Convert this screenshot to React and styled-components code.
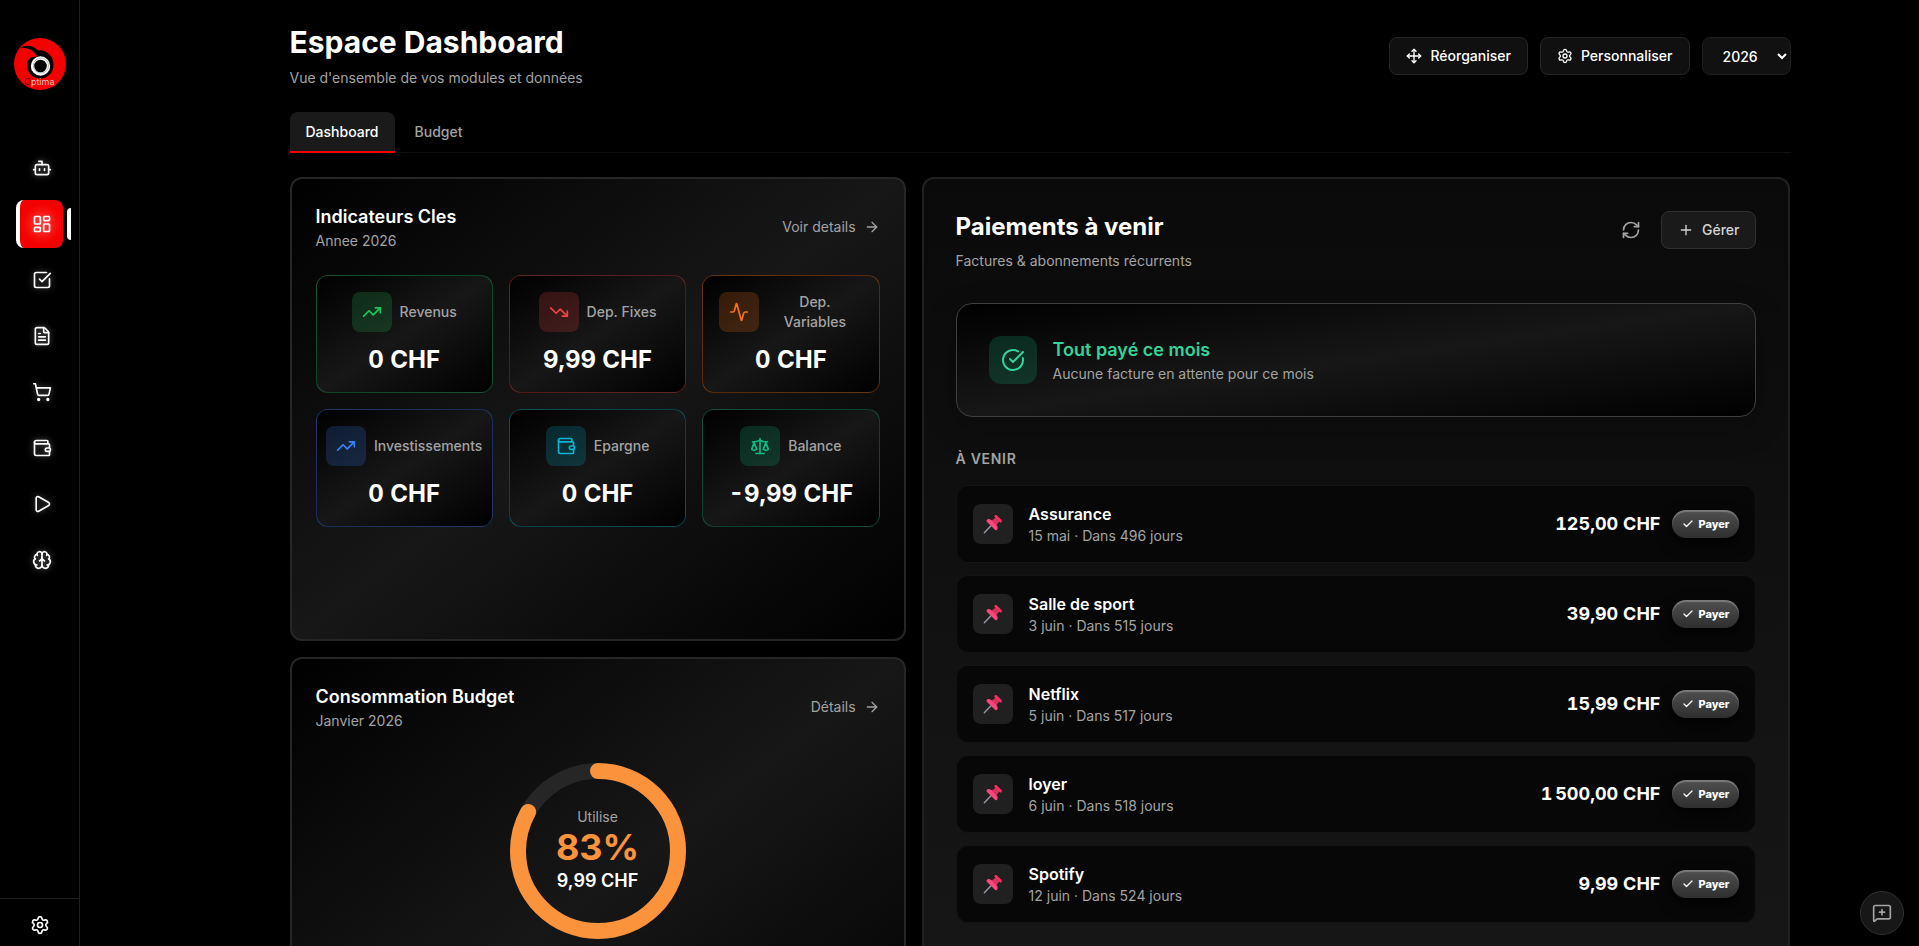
import React, { useState } from 'react'
import styled, { createGlobalStyle } from 'styled-components'
import {
    Activity,
    ArrowRight,
    Bot,
    Brain,
    Check,
    CircleCheckBig,
    FileText,
    LayoutDashboard,
    MessageSquarePlus,
    Move,
    Play,
    Plus,
    RefreshCw,
    Scale,
    Settings,
    ShoppingCart,
    SquareCheckBig,
    TrendingDown,
    TrendingUp,
    Wallet
} from 'lucide-react'

const GlobalStyle = createGlobalStyle`
    * {
        box-sizing: border-box;
    }
    html {
        scrollbar-width: none;
        background: #000;
    }
    body {
        margin: 0;
        background: #000;
        color: #fff;
        font-family: Inter, "Liberation Sans", sans-serif;
        font-size: 14px;
        line-height: 20px;
    }
    h1, h2, h3, p, ul {
        margin: 0;
        padding: 0;
    }
    ul {
        list-style: none;
    }
    button, select {
        font: inherit;
        color: inherit;
        cursor: pointer;
    }
    a {
        color: inherit;
        text-decoration: none;
    }
`

const Shell = styled.div`
    display: grid;
    grid-template-columns: 80px minmax(0, 1fr);
    align-items: start;
`

const Sidebar = styled.aside`
    position: sticky;
    top: 0;
    height: 100vh;
    display: flex;
    flex-direction: column;
    border-right: 1px solid #202020;
`
const LogoLink = styled.a`
    display: flex;
    justify-content: center;
    padding: 38px 0 54px 1px;
`
const Nav = styled.nav`
    flex: 1;
    display: flex;
    flex-direction: column;
    gap: 8px;
    padding: 0 16px;
`
const NavLink = styled.a`
    position: relative;
    display: flex;
    align-items: center;
    justify-content: center;
    height: 48px;
    border-left: 4px solid ${props => (props.$active ? '#fff' : 'transparent')};
    border-radius: 8px;
    background: ${props => (props.$active ? 'radial-gradient(circle, #f83030 0, #f40000 20px)' : 'transparent')};

    svg {
        filter: drop-shadow(0 0 3px rgba(255, 255, 255, ${props => (props.$active ? 0.2 : 0.4)}));
    }
`
const ActiveMark = styled.span`
    position: absolute;
    right: -8px;
    width: 4px;
    height: 32px;
    border-radius: 4px 0 0 4px;
    background: #fff;
`
const SidebarFooter = styled.div`
    display: flex;
    justify-content: center;
    padding: 16px 0 11px 1px;
    border-top: 1px solid #202020;
`
const FooterLink = styled.a`
    display: flex;
`

const Main = styled.main`
    padding: 24px 16px 24px 97px;
`
const Content = styled.div`
    max-width: 1501px;
    margin: 0 auto;
`
const PageHeader = styled.header`
    display: flex;
    align-items: center;
    justify-content: space-between;
    margin-bottom: 24px;
`
const PageTitle = styled.h1`
    margin-bottom: 8px;
    font-size: 30px;
    line-height: 36px;
    font-weight: 700;
`
const Muted = styled.p`
    color: #a3a3a3;
`
const Actions = styled.div`
    display: flex;
    align-items: center;
    gap: 12px;
`
const Button = styled.button`
    display: flex;
    align-items: center;
    gap: 8px;
    padding: 8px 16px;
    border: 1px solid ${props => (props.$soft ? '#303030' : '#262626')};
    border-radius: 8px;
    background: ${props => (props.$soft ? '#1a1a1a' : '#101010')};
    color: ${props => (props.$soft ? '#d4d4d4' : '#fff')};
    font-weight: 500;
`
const IconButton = styled.button`
    display: flex;
    align-items: center;
    justify-content: center;
    width: 36px;
    height: 38px;
    padding: 0;
    border: 0;
    background: none;
    color: #a3a3a3;
`
const YearSelect = styled.select`
    width: 89px;
    height: 38px;
    padding: 0 0 0 16px;
    border: 1px solid #1f1f1f;
    border-radius: 8px;
    background: #111;
    color: #fff;
    font-weight: 500;
`

const Tabs = styled.div`
    display: flex;
    gap: 4px;
    margin-bottom: 24px;
    border-bottom: 1px solid #101010;
`
const Tab = styled.button`
    margin-bottom: -1px;
    padding: 10px 16px 9px;
    border: 0;
    border-bottom: 2px solid ${props => (props.$active ? '#f40000' : 'transparent')};
    border-radius: 8px 8px 0 0;
    background: ${props => (props.$active ? '#1a1a1a' : 'transparent')};
    color: ${props => (props.$active ? '#fff' : '#a3a3a3')};
    font-weight: 500;
`

const Board = styled.div`
    display: grid;
    grid-template-columns: repeat(12, minmax(0, 1fr));
    grid-auto-rows: minmax(464px, auto);
    gap: 16px;
`
const Card = styled.section`
    grid-column: span 5;
    padding: 24px;
    border: 2px solid #262626;
    border-radius: 12px;
    background: linear-gradient(to bottom right, #000, #171717 50%, #000);
    background-origin: border-box;
`
const PaymentsCard = styled(Card)`
    grid-column: 6 / span 7;
    grid-row: 1 / span 2;
    padding: 32px;
    border-color: #202020;
    background: linear-gradient(#0a0a0a, #171717 85%);
    background-origin: border-box;
`
const CardHeader = styled.div`
    display: flex;
    align-items: center;
    justify-content: space-between;
    margin-bottom: 24px;
`
const PaymentsHeader = styled(CardHeader)`
    align-items: flex-start;
    margin-bottom: 32px;
`
const CardTitle = styled.h2`
    font-size: 18px;
    line-height: 28px;
    font-weight: 600;
`
const PaymentsTitle = styled.h2`
    margin-bottom: 8px;
    font-size: 24px;
    line-height: 32px;
    font-weight: 700;
`
const MoreLink = styled.a`
    display: flex;
    align-items: center;
    gap: 8px;
    color: #a3a3a3;
`

const Tiles = styled.div`
    display: grid;
    grid-template-columns: repeat(3, minmax(0, 1fr));
    gap: 16px;
`
const Tile = styled.div`
    padding: 16px;
    border: 1px solid rgb(${props => props.$rgb} / 0.35);
    border-radius: 12px;
    background: linear-gradient(to bottom right, #000, #171717 50%, #000);
    text-align: center;
`
const TileHead = styled.div`
    display: flex;
    align-items: center;
    justify-content: center;
    gap: 8px;
    height: 40px;
    margin-bottom: 12px;
    color: #a3a3a3;
    font-weight: 500;
`
const IconBox = styled.span`
    flex: none;
    display: flex;
    align-items: center;
    justify-content: center;
    width: 40px;
    height: 40px;
    border-radius: 8px;
    background: rgb(${props => props.$rgb} / 0.2);
    color: rgb(${props => props.$rgb});
`
const StatusIcon = styled(IconBox)`
    width: 48px;
    height: 48px;
    border-radius: 12px;
    color: #34d399;
`
const TileValue = styled.div`
    font-size: 24px;
    line-height: 32px;
    font-weight: 700;
    font-variant-numeric: tabular-nums;
    white-space: nowrap;
`

const Gauge = styled.div`
    display: grid;
    place-items: center;

    > * {
        grid-area: 1 / 1;
    }
`
const GaugeLabel = styled.div`
    text-align: center;
    color: #a3a3a3;
`
const GaugePercent = styled.div`
    color: #fb923c;
    font-size: 36px;
    line-height: 40px;
    font-weight: 700;
`
const GaugeAmount = styled.div`
    color: #fff;
    font-size: 18px;
    line-height: 28px;
    font-weight: 600;
`

const Status = styled.div`
    display: flex;
    gap: 16px;
    margin-bottom: 32px;
    padding: 32px;
    border: 1px solid #404040;
    border-radius: 16px;
    background: linear-gradient(to bottom right, #000, #171717 50%, #000);
    box-shadow: 0 10px 30px rgba(0, 0, 0, 0.25);
`
const StatusTitle = styled.h3`
    color: #34d399;
    font-size: 18px;
    line-height: 28px;
    font-weight: 600;
`
const SectionLabel = styled.h3`
    margin-bottom: 16px;
    color: #a3a3a3;
    font-size: 14px;
    line-height: 20px;
    font-weight: 600;
    letter-spacing: 0.05em;
    text-transform: uppercase;
`
const Bills = styled.ul`
    display: flex;
    flex-direction: column;
    gap: 12px;
`
const Bill = styled.li`
    display: flex;
    align-items: center;
    gap: 16px;
    padding: 16px;
    border: 1px solid #141414;
    border-radius: 12px;
    background: #070707;
`
const BillIcon = styled.span`
    flex: none;
    display: flex;
    align-items: center;
    justify-content: center;
    width: 40px;
    height: 40px;
    border-radius: 8px;
    background: #202020;
`
const BillText = styled.div`
    flex: 1;
    min-width: 0;
`
const BillName = styled.div`
    font-size: 16px;
    line-height: 24px;
    font-weight: 600;
`
const BillRight = styled.div`
    display: flex;
    align-items: center;
    gap: 12px;
`
const Amount = styled.span`
    font-size: 18px;
    line-height: 28px;
    font-weight: 700;
    font-variant-numeric: tabular-nums;
`
const PayButton = styled.button`
    display: flex;
    align-items: center;
    gap: 4px;
    height: 28px;
    padding: 0 10px;
    border: 0;
    border-radius: 14px;
    background: linear-gradient(#505050, #2e2e2e);
    box-shadow: inset 0 2px 1px rgba(255, 255, 255, 0.25), 0 6px 14px rgba(0, 0, 0, 0.8);
    font-size: 11px;
    line-height: 16px;
    font-weight: 800;
`

const FeedbackButton = styled.button`
    position: fixed;
    right: 15px;
    bottom: 11px;
    display: flex;
    align-items: center;
    justify-content: center;
    width: 44px;
    height: 44px;
    padding: 0;
    border: 1px solid #303030;
    border-radius: 50%;
    background: #171717;
    color: #a3a3a3;
`

const navItems = [
    { label: 'Assistant', icon: Bot },
    { label: 'Dashboard', icon: LayoutDashboard },
    { label: 'Taches', icon: SquareCheckBig },
    { label: 'Documents', icon: FileText },
    { label: 'Courses', icon: ShoppingCart },
    { label: 'Budget', icon: Wallet },
    { label: 'Media', icon: Play },
    { label: 'Connaissances', icon: Brain }
]

const indicators = [
    { label: 'Revenus', value: '0 CHF', rgb: '34 197 94', icon: TrendingUp },
    { label: 'Dep. Fixes', value: '9,99 CHF', rgb: '239 68 68', icon: TrendingDown },
    { label: 'Dep. Variables', value: '0 CHF', rgb: '249 115 22', icon: Activity },
    { label: 'Investissements', value: '0 CHF', rgb: '59 130 246', icon: TrendingUp },
    { label: 'Epargne', value: '0 CHF', rgb: '6 182 212', icon: Wallet },
    { label: 'Balance', value: '-9,99 CHF', rgb: '16 185 129', icon: Scale }
]

const bills = [
    { name: 'Assurance', due: '15 mai · Dans 496 jours', amount: '125,00 CHF' },
    { name: 'Salle de sport', due: '3 juin · Dans 515 jours', amount: '39,90 CHF' },
    { name: 'Netflix', due: '5 juin · Dans 517 jours', amount: '15,99 CHF' },
    { name: 'loyer', due: '6 juin · Dans 518 jours', amount: '1\u202f500,00 CHF' },
    { name: 'Spotify', due: '12 juin · Dans 524 jours', amount: '9,99 CHF' }
]

const Logo = () => (
    <svg width="52" height="52" viewBox="0 0 52 52" role="img" aria-label="Optima">
        <circle cx="26" cy="26" r="26" fill="#f40000" />
        <path
            d="M6 10 C12 6 20 8 24 12.500 C32 11 39.500 18 39.500 26.500 C39.500 35 33.500 40.500 26 40.500 C18.500 40.500 13 34.500 13 27 C13 22 16 18 23 18.500 C21 13 13 8.500 6 10 Z"
            fill="#000"
        />
        <circle cx="26.500" cy="28" r="8" fill="#000" stroke="#fff" strokeWidth="3.400" />
        <circle cx="27" cy="27.500" r="7.600" fill="none" stroke="#777" strokeWidth="0.500" />
        <text x="10" y="47" fontSize="9" fontFamily="Inter, sans-serif" fill="#eec4c4">
            <tspan fill="#500">O</tspan>ptima
        </text>
    </svg>
)

const Pushpin = () => (
    <svg width="20" height="20" viewBox="0 0 20 20" aria-hidden="true">
        <path d="M1.300 18.700 L8 11.800" stroke="#9b93a8" strokeWidth="1.400" strokeLinecap="round" />
        <path d="M6.200 6.500 L10.500 5.500 L14.500 9.500 L13 14 Z" fill="#c2185b" />
        <path d="M8 8 L12.500 3.500 L16.500 7.500 L12 12 Z" fill="#d6325e" />
        <path
            d="M3.600 6.300 C4.500 4.600 6.500 4.700 7.800 5.800 L14 12 C15.200 13.300 14.900 15.500 13.500 16.200 C12.900 16.500 12.300 16.200 11.900 15.800 L4 7.900 C3.500 7.400 3.300 6.900 3.600 6.300 Z"
            fill="#f8477d"
        />
        <path
            d="M11.700 1.500 C12.300 0.900 13.200 0.900 13.900 1.500 L18.500 6.100 C19.100 6.800 19.100 7.700 18.500 8.200 C17.900 8.700 17.200 8.600 16.600 8 L12 3.500 C11.300 2.800 11.200 2.100 11.700 1.500 Z"
            fill="#f92f60"
        />
    </svg>
)

const BudgetGauge = ({ percent, amount }) => {
    const length = 2 * Math.PI * 80
    return (
        <Gauge>
            <svg width="192" height="192" viewBox="0 0 192 192" fill="none" strokeWidth="16">
                <circle cx="96" cy="96" r="80" stroke="#262626" />
                <circle
                    cx="96"
                    cy="96"
                    r="80"
                    stroke="#fb923c"
                    strokeLinecap="round"
                    strokeDasharray={`${(length * percent) / 100} ${length}`}
                    transform="rotate(-90 96 96)"
                />
            </svg>
            <GaugeLabel>
                Utilise
                <GaugePercent>{percent}%</GaugePercent>
                <GaugeAmount>{amount}</GaugeAmount>
            </GaugeLabel>
        </Gauge>
    )
}

const App = () => {
    const [tab, setTab] = useState('Dashboard')
    const [year, setYear] = useState('2026')

    return (
        <Shell>
            <GlobalStyle />
            <Sidebar>
                <LogoLink href="#">
                    <Logo />
                </LogoLink>
                <Nav>
                    {navItems.map(({ label, icon: Icon }) => {
                        const active = label === 'Dashboard'
                        return (
                            <NavLink key={label} href="#" aria-label={label} $active={active}>
                                <Icon size={20} />
                                {active && <ActiveMark />}
                            </NavLink>
                        )
                    })}
                </Nav>
                <SidebarFooter>
                    <FooterLink href="#" aria-label="Parametres">
                        <Settings size={20} />
                    </FooterLink>
                </SidebarFooter>
            </Sidebar>

            <Main>
                <Content>
                    <PageHeader>
                        <div>
                            <PageTitle>Espace Dashboard</PageTitle>
                            <Muted>Vue d'ensemble de vos modules et données</Muted>
                        </div>
                        <Actions>
                            <Button>
                                <Move size={16} />
                                Réorganiser
                            </Button>
                            <Button>
                                <Settings size={16} />
                                Personnaliser
                            </Button>
                            <YearSelect aria-label="Année" value={year} onChange={e => setYear(e.target.value)}>
                                <option>2025</option>
                                <option>2026</option>
                            </YearSelect>
                        </Actions>
                    </PageHeader>

                    <Tabs role="tablist">
                        {['Dashboard', 'Budget'].map(name => (
                            <Tab
                                key={name}
                                role="tab"
                                aria-selected={tab === name}
                                $active={tab === name}
                                onClick={() => setTab(name)}
                            >
                                {name}
                            </Tab>
                        ))}
                    </Tabs>

                    <Board>
                        <Card>
                            <CardHeader>
                                <div>
                                    <CardTitle>Indicateurs Cles</CardTitle>
                                    <Muted>Annee 2026</Muted>
                                </div>
                                <MoreLink href="#">
                                    Voir details
                                    <ArrowRight size={16} />
                                </MoreLink>
                            </CardHeader>
                            <Tiles>
                                {indicators.map(({ label, value, rgb, icon: Icon }) => (
                                    <Tile key={label} $rgb={rgb}>
                                        <TileHead>
                                            <IconBox $rgb={rgb}>
                                                <Icon size={20} />
                                            </IconBox>
                                            <span>{label}</span>
                                        </TileHead>
                                        <TileValue>{value}</TileValue>
                                    </Tile>
                                ))}
                            </Tiles>
                        </Card>

                        <PaymentsCard>
                            <PaymentsHeader>
                                <div>
                                    <PaymentsTitle>Paiements à venir</PaymentsTitle>
                                    <Muted>Factures & abonnements récurrents</Muted>
                                </div>
                                <Actions>
                                    <IconButton aria-label="Actualiser">
                                        <RefreshCw size={20} />
                                    </IconButton>
                                    <Button $soft>
                                        <Plus size={16} />
                                        Gérer
                                    </Button>
                                </Actions>
                            </PaymentsHeader>

                            <Status>
                                <StatusIcon $rgb="16 185 129">
                                    <CircleCheckBig size={24} />
                                </StatusIcon>
                                <div>
                                    <StatusTitle>Tout payé ce mois</StatusTitle>
                                    <Muted>Aucune facture en attente pour ce mois</Muted>
                                </div>
                            </Status>

                            <SectionLabel>À venir</SectionLabel>
                            <Bills>
                                {bills.map(bill => (
                                    <Bill key={bill.name}>
                                        <BillIcon>
                                            <Pushpin />
                                        </BillIcon>
                                        <BillText>
                                            <BillName>{bill.name}</BillName>
                                            <Muted>{bill.due}</Muted>
                                        </BillText>
                                        <BillRight>
                                            <Amount>{bill.amount}</Amount>
                                            <PayButton>
                                                <Check size={12} strokeWidth={2.5} />
                                                Payer
                                            </PayButton>
                                        </BillRight>
                                    </Bill>
                                ))}
                            </Bills>
                        </PaymentsCard>

                        <Card>
                            <CardHeader>
                                <div>
                                    <CardTitle>Consommation Budget</CardTitle>
                                    <Muted>Janvier 2026</Muted>
                                </div>
                                <MoreLink href="#">
                                    Détails
                                    <ArrowRight size={16} />
                                </MoreLink>
                            </CardHeader>
                            <BudgetGauge percent={83} amount="9,99 CHF" />
                        </Card>
                    </Board>
                </Content>
            </Main>

            <FeedbackButton aria-label="Envoyer un commentaire">
                <MessageSquarePlus size={20} />
            </FeedbackButton>
        </Shell>
    )
}

export default App
